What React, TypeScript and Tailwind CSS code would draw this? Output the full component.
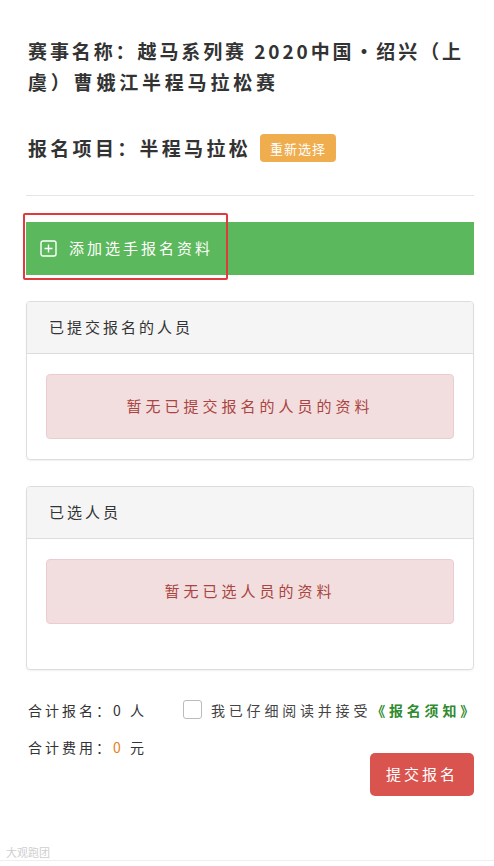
const cjk = { fontFamily: '"Noto Sans CJK SC", "Noto Sans", sans-serif' };

function Panel({ title, empty, bodyClass }: { title: string; empty: string; bodyClass: string }) {
  return (
    <div className="rounded-[4px] border border-[#dddddd] shadow-[0_1px_2px_rgba(0,0,0,0.06)] overflow-hidden">
      <div className="h-[52px] bg-[#f5f5f5] border-b border-[#dddddd] flex items-center px-[22px] text-[15px] tracking-[3px] text-[#333333]">
        {title}
      </div>
      <div className={bodyClass}>
        <div className="h-[65px] rounded-[4px] bg-[#f2dede] border border-[#ebccd1] flex items-center justify-center text-[15px] tracking-[4px] text-[#a94442]">
          {empty}
        </div>
      </div>
    </div>
  );
}

export default function App() {
  return (
    <div className="w-[494px] h-[866px] bg-white relative overflow-hidden" style={cjk}>
      <div className="pl-[26px] pr-[20px]">
        <div className="pt-[35px] pl-[2px] text-[19px] leading-[31px] font-bold text-[#333333] whitespace-nowrap">
          <div className="tracking-[2.9px]">赛事名称：越马系列赛 2020中国·绍兴（上</div>
          <div className="tracking-[3.8px]">虞）曹娥江半程马拉松赛</div>
        </div>
        <div className="mt-[37px] pl-[2px] flex items-center gap-[9px]">
          <span className="text-[19px] font-bold tracking-[3.3px] text-[#333333]">报名项目：半程马拉松</span>
          <span className="h-[28px] w-[76px] justify-center rounded-[4px] bg-[#f0ad4e] text-white text-[13px] tracking-[1px] flex items-center">
            重新选择
          </span>
        </div>
        <div className="mt-[32px] border-t border-[#e5e5e5]" />

        <div className="mt-[26px] relative">
          <div className="h-[53px] bg-[#5cb85c] flex items-center pl-[14px] text-white text-[15px] tracking-[3px]">
            <svg width="17" height="17" viewBox="0 0 17 17" fill="none" stroke="white" strokeWidth="1.4">
              <rect x="1" y="1" width="15" height="15" rx="2" />
              <path d="M8.5 4.5v8M4.5 8.5h8" />
            </svg>
            <span className="ml-[12px]">添加选手报名资料</span>
          </div>
          <div className="absolute left-[-3px] top-[-9px] w-[205px] h-[67px] border-2 border-[#e0393e] rounded-[2px]" />
        </div>

        <div className="mt-[26px]">
          <Panel title="已提交报名的人员" empty="暂无已提交报名的人员的资料" bodyClass="px-[19px] pt-[20px] pb-[20px]" />
        </div>
        <div className="mt-[26px]">
          <Panel title="已选人员" empty="暂无已选人员的资料" bodyClass="px-[19px] pt-[20px] pb-[45px]" />
        </div>

        <div className="mt-[28px] flex justify-between pl-[2px]">
          <div className="flex flex-col gap-[13px] text-[14px] tracking-[3px] text-[#333333]">
            <span className="leading-[24px]">合计报名：0 人</span>
            <span className="leading-[24px]">
              合计费用：<span className="text-[#e67e22]">0</span> 元
            </span>
          </div>
          <div className="flex flex-col items-end">
            <div className="flex items-center gap-[9px] text-[14px] leading-[24px] tracking-[3.8px] text-[#444444] -mr-[4px]">
              <span className="w-[19px] h-[19px] border border-[#bbbbbb] rounded-[3px] bg-white" />
              <span>
                我已仔细阅读并接受<span className="text-[#2e8b2e] font-bold">《报名须知》</span>
              </span>
            </div>
            <button className="mt-[31px] w-[104px] h-[43px] rounded-[5px] bg-[#d9534f] text-white text-[15px] tracking-[3px]">
              提交报名
            </button>
          </div>
        </div>
      </div>

      <div className="absolute left-[6px] bottom-[6px] text-[11px] text-[#cfcfcf]">大观跑团</div>
      <div className="absolute left-0 right-0 bottom-[5px] border-t border-[#eeeeee]" />
    </div>
  );
}
